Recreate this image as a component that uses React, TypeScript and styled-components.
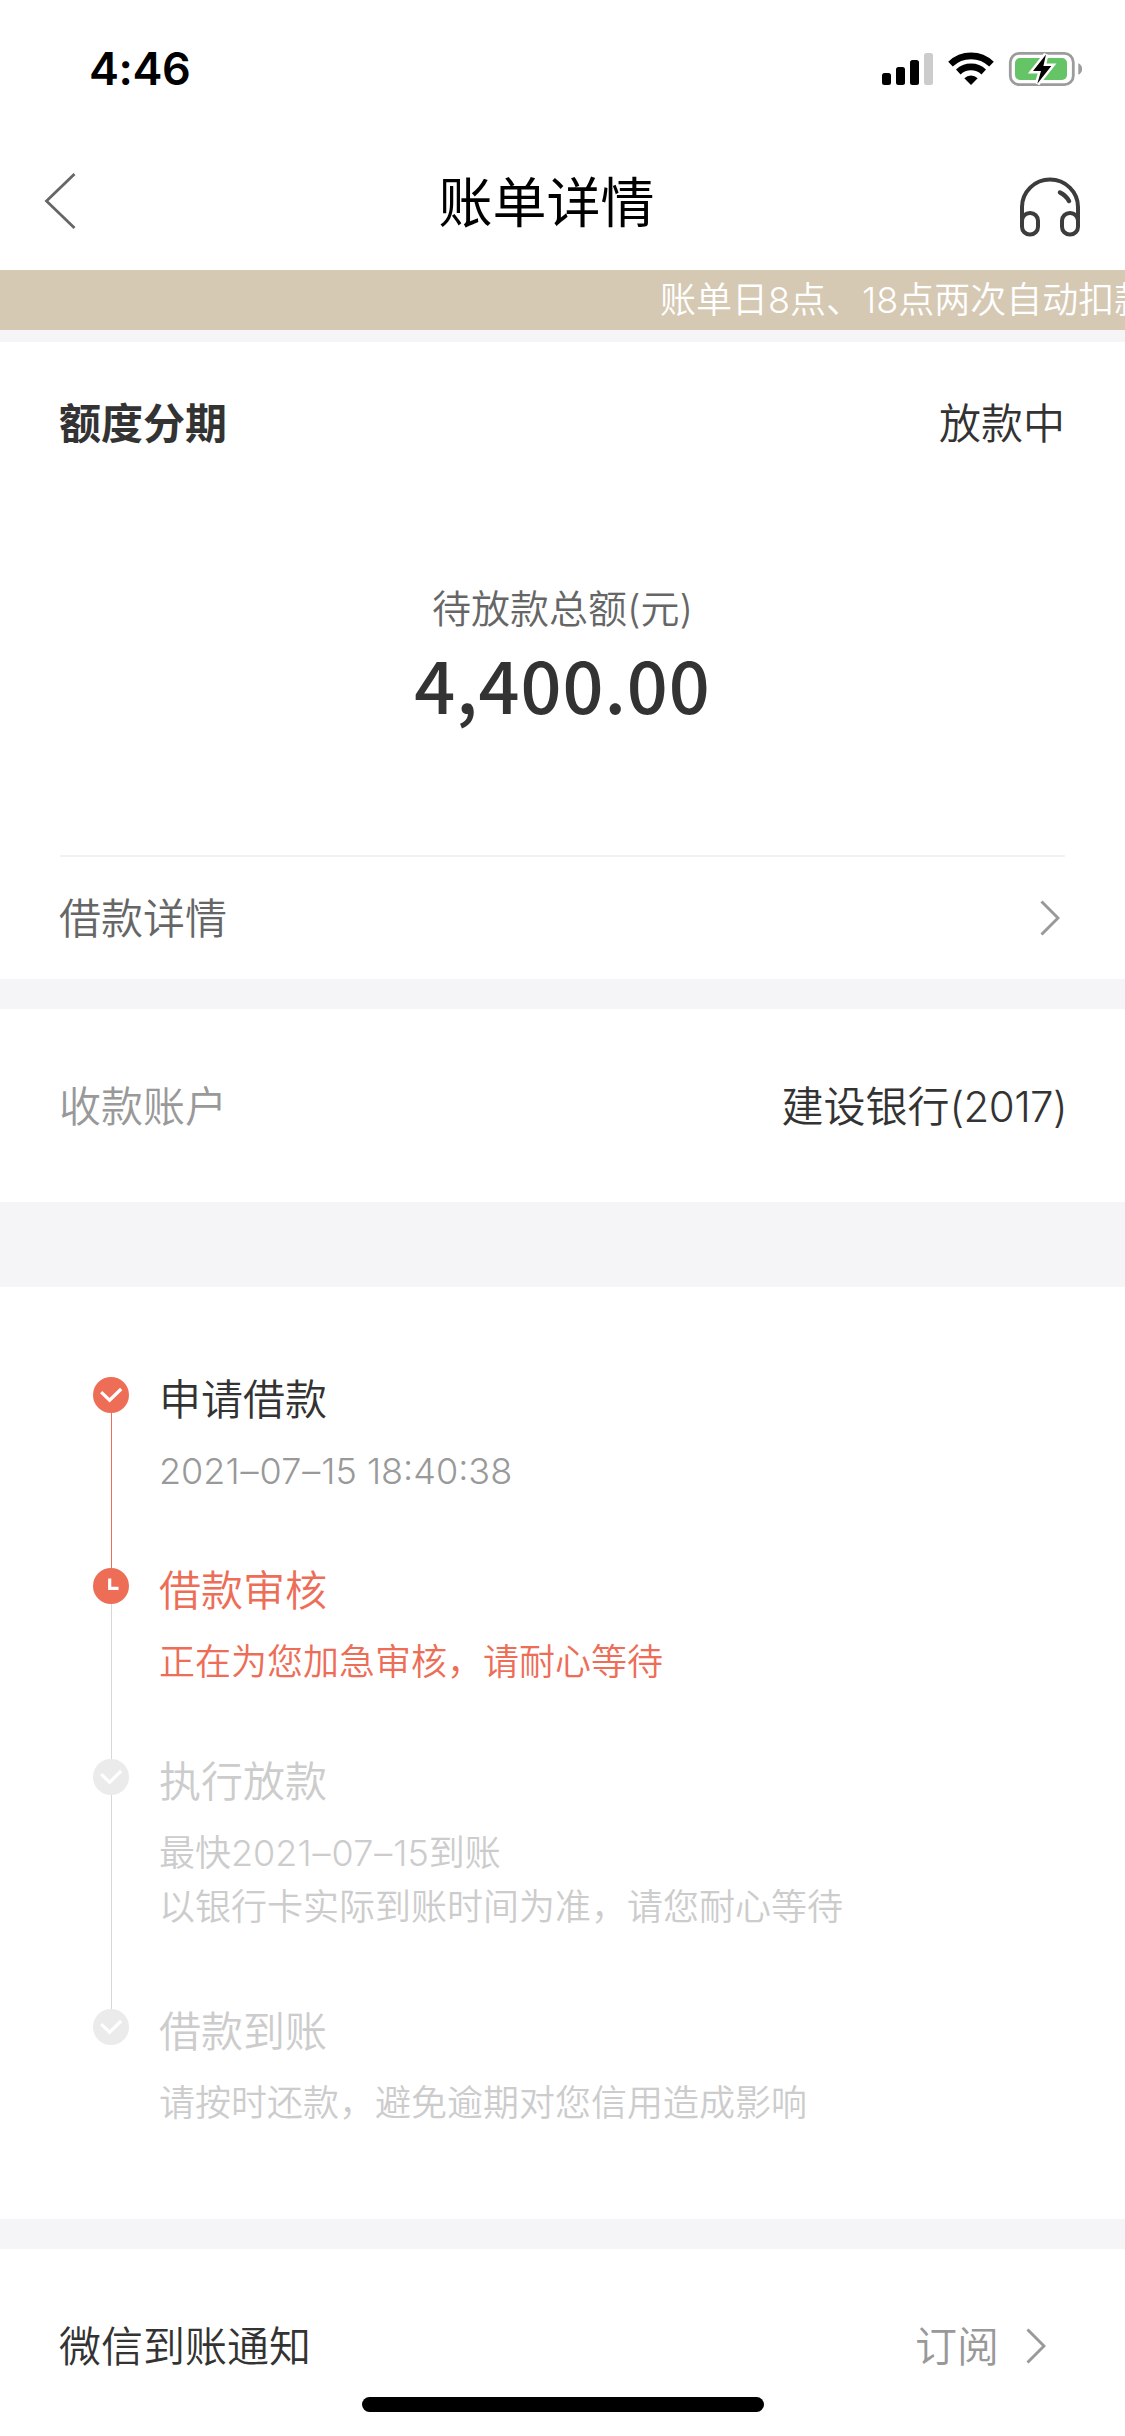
import React from "react";
import styled, { createGlobalStyle } from "styled-components";

const GlobalStyle = createGlobalStyle`
  * { box-sizing: border-box; }
  html, body { margin: 0; padding: 0; background: #fff; }
  body { font-family: Inter, "Noto Sans CJK SC", sans-serif; overflow: hidden; }
`;

const Screen = styled.div`
  position: relative;
  display: flex;
  flex-direction: column;
  width: 1125px;
  height: 2436px;
  overflow: hidden;
  background: #f5f5f8;
  color: #333;
  font-weight: 350;
  font-size: 42px;
  line-height: 60px;
  white-space: nowrap;
`;

const StatusBar = styled.header`
  display: flex;
  justify-content: space-between;
  align-items: center;
  height: 138px;
  padding: 0 43px 0 89px;
  background: #fff;
`;

const Clock = styled.time`
  font-size: 45px;
  font-weight: 600;
  letter-spacing: -0.4px;
  color: #000;
`;

const StatusIcons = styled.svg`
  display: block;
`;

const NavBar = styled.nav`
  display: grid;
  grid-template-columns: 120px 1fr 150px;
  align-items: center;
  height: 132px;
  padding: 0 0 6px;
  background: #fff;
`;

const BackButton = styled.button`
  border: 0;
  padding: 0 0 0 43px;
  background: none;
  display: flex;
`;

const Title = styled.h1`
  margin: 0;
  padding: 5px 2px 0 0;
  font-size: 54px;
  font-weight: 400;
  text-align: center;
  color: #000;
`;

const SupportButton = styled.button`
  border: 0;
  padding: 12px 0 0 43px;
  background: none;
  display: flex;
`;

const Notice = styled.div`
  height: 60px;
  padding-left: 660px;
  background: #d5c9b3;
  color: #fff;
  font-size: 36px;
  line-height: 60px;
  overflow: hidden;
`;

const Card = styled.section<{ $gap: number; $height: number }>`
  display: flex;
  flex-direction: column;
  flex: none;
  height: ${(p) => p.$height}px;
  margin-top: ${(p) => p.$gap}px;
  padding: 0 60px;
  background: #fff;
`;

const Row = styled.div<{ $height: number; $divided?: boolean }>`
  display: flex;
  align-items: center;
  justify-content: space-between;
  flex: none;
  height: ${(p) => p.$height}px;
  border-top: ${(p) => (p.$divided ? "2px solid #f2f2f2" : "0")};
`;

const Label = styled.span<{ $color?: string; $bold?: boolean }>`
  margin-left: -1px;
  padding-top: 2px;
  color: ${(p) => p.$color ?? "#333"};
  font-weight: ${(p) => (p.$bold ? 700 : "inherit")};
`;

const CardTail = styled.span`
  margin-right: -2px;
  letter-spacing: -0.6px;
`;

const Summary = styled.div`
  display: flex;
  flex: 1;
  flex-direction: column;
  align-items: center;
  padding-top: 75px;
`;

const SummaryLabel = styled.div`
  font-size: 39px;
  line-height: 60px;
  color: #666;
`;

const Amount = styled.strong`
  font-family: "Noto Sans CJK SC", sans-serif;
  font-size: 72px;
  font-weight: 500;
  letter-spacing: 0.9px;
  line-height: 88px;
`;

const Action = styled.span<{ $inset: number }>`
  display: flex;
  align-items: center;
  gap: 27px;
  padding-right: ${(p) => p.$inset}px;
  color: #999;
`;

const ActionText = styled.span`
  padding-top: 2px;
`;

const Timeline = styled.ol`
  margin: 0;
  padding: 90px 0 0 33px;
  list-style: none;
`;

const Step = styled.li<{ $space: number }>`
  display: grid;
  grid-template-columns: 36px 1fr;
  column-gap: 30px;
  & > div:last-child { padding-bottom: ${(p) => p.$space}px; }
`;

const Rail = styled.div<{ $line?: string }>`
  display: flex;
  flex-direction: column;
  align-items: center;
  &::after {
    content: "";
    flex: 1;
    width: 1px;
    background: ${(p) => p.$line ?? "transparent"};
  }
`;

const StepTitle = styled.div<{ $color: string }>`
  padding-top: 1px;
  line-height: 44px;
  color: ${(p) => p.$color};
`;

const StepText = styled.div<{ $color: string }>`
  margin-top: 22px;
  font-size: 36px;
  line-height: 54px;
  color: ${(p) => p.$color};
`;

const Dash = styled.span`
  padding: 0 1px;
`;

const HomeIndicator = styled.div`
  position: absolute;
  left: 362px;
  bottom: 24px;
  width: 402px;
  height: 15px;
  border-radius: 8px;
  background: #000;
`;

const Chevron = () => (
  <svg width="20" height="36" viewBox="0 0 20 36" fill="none" stroke="#999" strokeWidth="3">
    <path d="M1.5 1.5 18 18 1.5 34.5" />
  </svg>
);

const Dot = ({ color, clock }: { color: string; clock?: boolean }) => (
  <svg width="36" height="36" viewBox="0 0 36 36" fill="none">
    <circle cx="18" cy="18" r="18" fill={color} />
    <path
      d={clock ? "M16.7 10.5V20.3H25.5" : "M8.2 15.2 16.6 23.2 28.2 12"}
      stroke="#fff"
      strokeWidth={3.2}
    />
  </svg>
);

/* Dates get a little air around each dash. */
const Line = ({ text }: { text: string }) => (
  <div>
    {text.split("–").map((part, i) => (
      <React.Fragment key={i}>
        {i > 0 && <Dash>–</Dash>}
        {part}
      </React.Fragment>
    ))}
  </div>
);

const steps = [
  {
    title: "申请借款",
    lines: ["2021–07–15 18:40:38"],
    titleColor: "#333",
    textColor: "#999",
    dot: "#ed6d57",
    line: "#ed6d57",
    space: 70,
  },
  {
    title: "借款审核",
    lines: ["正在为您加急审核，请耐心等待"],
    titleColor: "#ed6d57",
    textColor: "#ed6d57",
    dot: "#ed6d57",
    clock: true,
    line: "#d8d8d8",
    space: 70,
  },
  {
    title: "执行放款",
    lines: ["最快2021–07–15到账", "以银行卡实际到账时间为准，请您耐心等待"],
    titleColor: "#ccc",
    textColor: "#ccc",
    dot: "#ebebeb",
    line: "#d8d8d8",
    space: 75,
  },
  {
    title: "借款到账",
    lines: ["请按时还款，避免逾期对您信用造成影响"],
    titleColor: "#ccc",
    textColor: "#ccc",
    dot: "#ebebeb",
    space: 0,
  },
];

export default function App() {
  return (
    <Screen>
      <GlobalStyle />
      <StatusBar>
        <Clock>4:46</Clock>
        <StatusIcons width="200" height="36" viewBox="882 51 200 36">
          <rect x="882" y="73" width="9" height="12" rx="2.5" />
          <rect x="896" y="67" width="9" height="18" rx="2.5" />
          <rect x="910" y="60" width="9" height="25" rx="2.5" />
          <rect x="924" y="53" width="9" height="32" rx="2.5" fill="#ccc" />
          <g fill="none" stroke="#000" strokeWidth="6.6">
            <path d="M950.5 64.2a29.5 29.5 0 0 1 41 0" />
            <path d="M958.3 72a18.4 18.4 0 0 1 25.4 0" />
          </g>
          <path d="M964.3 78.2a9.7 9.7 0 0 1 13.4 0L971 85z" />
          <rect x="1010.3" y="53.3" width="63" height="31.4" rx="9" fill="none" stroke="#9c9c9c" strokeWidth="2.8" />
          <rect x="1015" y="58" width="52" height="22" rx="5" fill="#65c466" />
          <path d="M1078.3 63.3a6.2 6.2 0 0 1 0 11.4z" fill="#9c9c9c" />
          <path
            d="M1046 54.5 1033 71H1041L1037.3 83.7 1051.3 66H1043.4z"
            stroke="#fff"
            strokeWidth="5"
            paintOrder="stroke"
          />
        </StatusIcons>
      </StatusBar>
      <NavBar>
        <BackButton aria-label="返回">
          <svg width="34" height="58" viewBox="0 0 34 58" fill="none" stroke="#666" strokeWidth="2.8">
            <path d="M31.5 2 3.5 29 31.5 56" />
          </svg>
        </BackButton>
        <Title>账单详情</Title>
        <SupportButton aria-label="客服">
          <svg width="64" height="62" viewBox="1018 176 64 62" fill="none" stroke="#3c3c3c" strokeWidth="4" strokeLinecap="round">
            <path d="M1022 219v-12a28 27.5 0 0 1 56 0v12" />
            <rect x="1022" y="213" width="16" height="21.5" rx="7.8" />
            <rect x="1062" y="213" width="16" height="21.5" rx="7.8" />
            <path d="M1060 192.5c4.200 2 7 4.800 9 8.500" strokeWidth="4.500" />
          </svg>
        </SupportButton>
      </NavBar>
      <Notice>账单日8点、18点两次自动扣款</Notice>

      <Card $gap={12} $height={637}>
        <Row $height={162}>
          <Label $bold>额度分期</Label>
          <Label>放款中</Label>
        </Row>
        <Summary>
          <SummaryLabel>待放款总额(元)</SummaryLabel>
          <Amount>4,400.00</Amount>
        </Summary>
        <Row $height={124} $divided>
          <Label $color="#666">借款详情</Label>
          <Action $inset={5}>
            <Chevron />
          </Action>
        </Row>
      </Card>

      <Card $gap={30} $height={193}>
        <Row $height={193}>
          <Label $color="#999">收款账户</Label>
          <Label>
            建设银行<CardTail>(2017)</CardTail>
          </Label>
        </Row>
      </Card>

      <Card $gap={85} $height={932}>
        <Timeline>
          {steps.map((s) => (
            <Step key={s.title} $space={s.space}>
              <Rail $line={s.line}>
                <Dot color={s.dot} clock={s.clock} />
              </Rail>
              <div>
                <StepTitle $color={s.titleColor}>{s.title}</StepTitle>
                <StepText $color={s.textColor}>
                  {s.lines.map((l) => (
                    <Line key={l} text={l} />
                  ))}
                </StepText>
              </div>
            </Step>
          ))}
        </Timeline>
      </Card>

      <Card $gap={30} $height={187}>
        <Row $height={193}>
          <Label>微信到账通知</Label>
          <Action $inset={19}>
            <ActionText>订阅</ActionText>
            <Chevron />
          </Action>
        </Row>
      </Card>
      <HomeIndicator />
    </Screen>
  );
}
